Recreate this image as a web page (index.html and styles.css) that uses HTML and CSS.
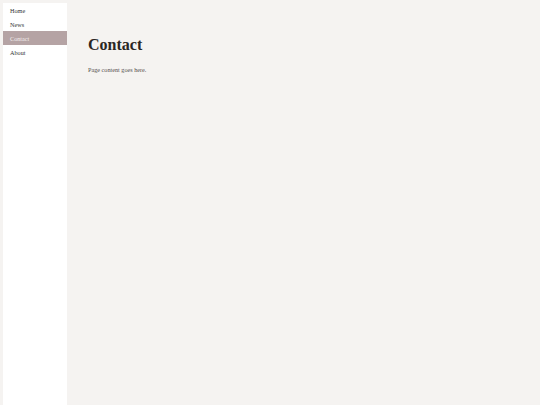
FILE: index.html
```html
<!DOCTYPE html>
<html>
<head>
<meta charset="utf-8">
<link rel="stylesheet" href="styles.css">
</head>
<body>
<div class="layout">
  <nav class="sidebar">
    <a class="nav-item" href="#">Home</a>
    <a class="nav-item" href="#">News</a>
    <a class="nav-item active" href="#">Contact</a>
    <a class="nav-item" href="#">About</a>
  </nav>
  <main class="content">
    <h1 class="title">Contact</h1>
    <p class="text">Page content goes here.</p>
  </main>
</div>
</body>
</html>
```
FILE: styles.css
```css
html, body {
  margin: 0;
  padding: 0;
  height: 100%;
}
body {
  background: #f5f3f1;
  font-family: "Liberation Serif", "Times New Roman", serif;
}
.layout {
  display: flex;
  min-height: 100vh;
  box-sizing: border-box;
  padding: 3px 0 0 3px;
}
.sidebar {
  width: 64px;
  background: #ffffff;
  display: flex;
  flex-direction: column;
}
.nav-item {
  display: block;
  height: 13px;
  line-height: 13px;
  padding: 1px 0 0 7px;
  font-size: 6.2px;
  color: #333333;
  text-decoration: none;
}
.nav-item.active {
  background: #b5a3a4;
  color: #f4eeee;
}
.content {
  flex: 1;
  padding: 33px 21px 0 21px;
}
.title {
  margin: 0;
  font-size: 16px;
  line-height: 18px;
  font-weight: bold;
  color: #2a2624;
}
.text {
  margin: 12px 0 0 0;
  font-size: 6.2px;
  line-height: 7px;
  color: #555050;
}
```
